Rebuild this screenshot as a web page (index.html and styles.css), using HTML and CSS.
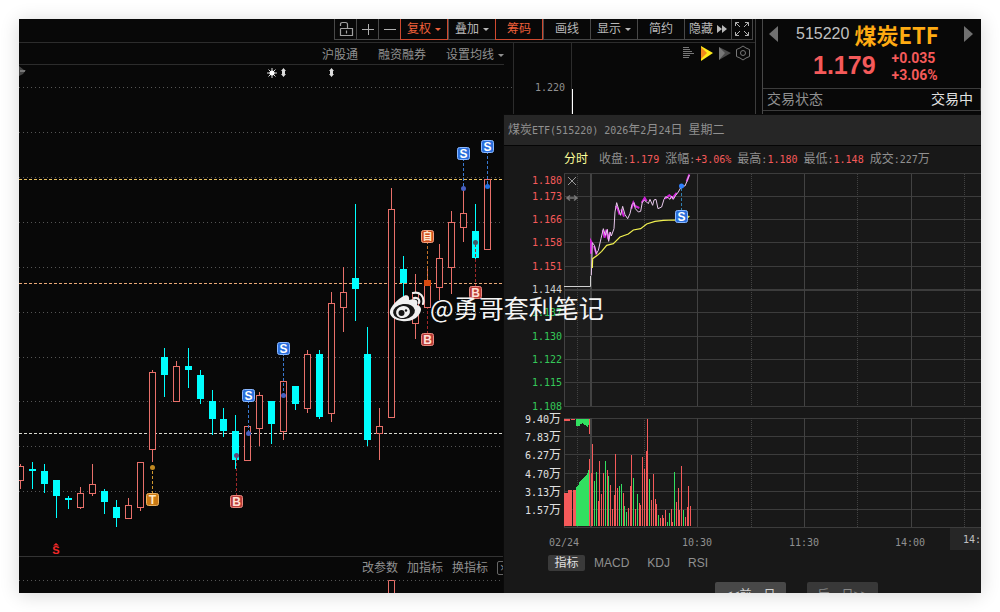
FILE: index.html
```
<!DOCTYPE html>
<html lang="zh-CN">
<head>
<meta charset="utf-8">
<title>煤炭ETF 515220</title>
<link rel="stylesheet" href="styles.css">
</head>
<body>
<div class="app">
  <main class="market">
    <nav class="toolbar">
      <button class="tool icon" aria-label="锁定"><svg width="16" height="16" viewBox="0 0 16 16"><path d="M2.500 7.500H14.500V14.500H2.500V7.500M2.500 5V3.500Q2.500 1.500 4.500 1.500H7.500Q9.500 1.500 9.500 3.500V7M8.500 9.500V12.500" fill="none" stroke="#a0a0a0" stroke-width="1.200"/></svg></button>
      <button class="tool icon" aria-label="放大"><svg width="12" height="12" viewBox="0 0 12 12"><path d="M0 6.500H12M6.500 1V12" stroke="#b0b0b0"/></svg></button>
      <button class="tool icon" aria-label="缩小"><svg width="12" height="12" viewBox="0 0 12 12"><path d="M0 6.500H12" stroke="#b0b0b0"/></svg></button>
      <button class="tool active">复权<i class="caret"></i></button>
      <button class="tool">叠加<i class="caret"></i></button>
      <button class="tool active">筹码</button>
      <button class="tool">画线</button>
      <button class="tool">显示<i class="caret"></i></button>
      <button class="tool">简约</button>
      <button class="tool">隐藏<svg width="10" height="8" viewBox="0 0 10 8"><path d="M0 0L5 4L0 8ZM5 0L10 4L5 8Z" fill="#b8b8b8"/></svg></button>
      <button class="tool icon" aria-label="全屏"><svg width="14" height="14" viewBox="0 0 14 14"><path d="M.5 4V.5H4M.5 .5L5 5M10 .5H13.500V4M13.500 .5L9 5M.5 10V13.500H4M.5 13.500L5 9M13.500 10V13.500H10M13.500 13.500L9 9" fill="none" stroke="#b0b0b0"/></svg></button>
    </nav>
    <div class="panes">
      <section class="kline">
        <div class="subbar">
          <a href="#">沪股通</a><a href="#">融资融券</a><a href="#">设置均线<i class="caret"></i></a>
        </div>
        <svg class="candles" id="candles" viewBox="19 65 494 491" preserveAspectRatio="xMinYMin slice"></svg>
        <div class="indicator-bar">
          <a href="#">改参数</a><a href="#">加指标</a><a href="#">换指标</a><button class="close" aria-label="关闭">×</button>
        </div>
        <svg class="lower" viewBox="19 579 494 14" preserveAspectRatio="xMinYMin slice"><path d="M19 580.500H503" stroke="#555" stroke-dasharray="1 3"/><path d="M388.500 594V580.500H394.500V594" fill="#080808" stroke="#e8706a"/></svg>
      </section>
      <div class="scale"><span class="num">1.220</span></div>
      <section class="chips">
        <svg width="70" height="16" viewBox="681 45 70 16">
          <path d="M683 47.500H689M683 49.500H690M683 51.500H692M683 53.500H694M683 55.500H690M683 57.500H689" stroke="#777"/>
          <path d="M701 46L713 53L701 61Z" fill="#ffeb1a"/><path d="M701 47L707 53L701 59Z" fill="#f08a1c"/>
          <path d="M719 47L731 53L719 60Z" fill="#4a4a4a"/><path d="M719 47L725 53L719 60Z" fill="#777"/>
          <path d="M743 46L746 48L749.500 49.500V56.500L746 58L743 60L740 58L736.500 56.500V49.500L740 48Z" fill="none" stroke="#777"/><circle cx="743" cy="53" r="2.500" fill="none" stroke="#777"/>
        </svg>
      </section>
    </div>
  </main>
  <aside class="quote">
    <div class="quote-title">
      <button class="arrow" aria-label="上一只"><svg width="9" height="16" viewBox="0 0 9 16"><path d="M9 0V16L0 8Z" fill="#707070"/></svg></button>
      <span class="code">515220</span><h1>煤炭ETF</h1>
      <button class="arrow next" aria-label="下一只"><svg width="9" height="16" viewBox="0 0 9 16"><path d="M0 0V16L9 8Z" fill="#707070"/></svg></button>
    </div>
    <div class="quote-price"><strong>1.179</strong><div class="change"><span>+0.035</span><span>+3.06%</span></div></div>
    <div class="status"><span>交易状态</span><b>交易中</b></div>
  </aside>

  <section class="popup">
    <header class="popup-head">煤炭<span class="num">ETF(515220) 2026</span>年<span class="num">2</span>月<span class="num">24</span>日<span class="num"> </span>星期二</header>
    <div class="summary">
      <b>分时</b>
      <span>收盘<span class="num">:<em>1.179</em></span></span>
      <span>涨幅<span class="num">:<em>+3.06%</em></span></span>
      <span>最高<span class="num">:<em>1.180</em></span></span>
      <span>最低<span class="num">:<em>1.148</em></span></span>
      <span>成交<span class="num">:227</span>万</span>
    </div>
    <svg class="intraday" id="intraday" viewBox="504 172 477 378" preserveAspectRatio="xMinYMin slice"></svg>
    <div class="tabs">
      <button class="tab selected">指标</button><button class="tab">MACD</button><button class="tab">KDJ</button><button class="tab">RSI</button>
    </div>
    <div class="days"><button>&lt;&lt;前一日</button><button class="dim" disabled>后一日&gt;&gt;</button></div>
  </section>

  <div class="watermark">
    <svg width="38" height="32" viewBox="0 0 38 32">
      <path d="M13 6C17 3 21 4 20 9C26 7 30 9 28 14C32 15 33 18 31 22C28 28 21 31 13 30C5 29 0 25 1 20C2 15 8 9 13 6Z" fill="#f0f0f0"/>
      <ellipse cx="15" cy="20.500" rx="11" ry="7.500" transform="rotate(-8 15 20.500)" fill="#151515"/>
      <ellipse cx="14" cy="21" rx="7" ry="6" transform="rotate(-12 14 21)" fill="#f0f0f0"/>
      <circle cx="12.500" cy="22" r="3" fill="#151515"/><circle cx="17" cy="19.500" r="1.200" fill="#151515"/>
      <path d="M24 2C31 0 36 6 34 13M25 7C29 6 31 9 30 12" fill="none" stroke="#f0f0f0" stroke-width="2.200" stroke-linecap="round"/>
    </svg>
    <span>@勇哥套利笔记</span>
  </div>
</div>
<script src="charts.js"></script>
</body>
</html>
```
FILE: styles.css
```
* { box-sizing: border-box; }
body {
  margin: 0;
  padding: 19px;
  background: #fff;
  font: 12px/16px "Liberation Sans", "Noto Sans CJK SC", sans-serif;
  color: #909090;
}
button { font: inherit; color: inherit; background: none; border: 0; padding: 0; }
a { color: inherit; text-decoration: none; }
.num { font-family: "DejaVu Sans Mono", monospace; font-size: 10px; white-space: pre; }
svg { display: block; }

.app {
  position: relative;
  display: flex;
  gap: 6px;
  height: calc(100vh - 38px);
  overflow: hidden;
  background: #080808;
}
body::before {
  content: "";
  position: absolute;
  inset: 19px;
  box-shadow: 0 2px 18px rgba(0, 0, 0, .16);
}
.market { flex: 1; display: flex; flex-direction: column; min-width: 0; border-right: 1px solid #3c3c3c; }

.toolbar { display: flex; justify-content: flex-end; height: 24px; padding: 0 2px 2px 0; border-bottom: 1px solid #2c2c2c; }
.tool {
  display: flex;
  align-items: center;
  justify-content: center;
  gap: 4px;
  width: 47px;
  border: 1px solid #484848;
  border-width: 0 0 1px 1px;
  color: #b8b8b8;
}
.tool:last-child { border-right-width: 1px; }
.tool.icon { width: 22px; }
.tool.active { width: 48px; color: #f0603a; border-color: #d04a30; border-right-width: 1px; }
.caret { border: 3px solid transparent; border-top-color: currentColor; border-bottom: 0; }

.panes { flex: 1; display: flex; min-height: 0; }
.kline { width: 495px; display: flex; flex-direction: column; border-right: 1px solid #2c2c2c; }
.subbar { display: flex; justify-content: flex-end; gap: 20px; height: 22px; padding: 3px 0 0; margin-right: 9px; border-bottom: 1px solid #2c2c2c; }
.subbar a { display: flex; align-items: center; gap: 4px; }
.candles { width: 100%; flex: 1; min-height: 0; }
.indicator-bar { display: flex; justify-content: flex-end; align-items: center; gap: 9px; height: 23px; margin-right: 9px; border-top: 1px solid #333; }
.close { width: 13px; height: 14px; margin-right: -6px; line-height: 12px; border: 1px solid #666; border-radius: 2px; }
.lower { width: 100%; height: 14px; }
.scale { width: 58px; padding: 36px 6px 0 0; text-align: right; border-right: 1px solid #2c2c2c; }
.chips { flex: 1; display: flex; justify-content: flex-end; align-items: flex-start; padding: 2px 4px 0 0; }
.chips::before { content: ""; width: 1px; height: 60px; margin: 44px auto 0 0; background: #fff; }

.quote { width: 219px; border-left: 1px solid #484848; }
.quote-title { display: flex; align-items: center; gap: 5px; height: 30px; padding: 0 8px 0 6px; }
.arrow { margin-right: 13px; }
.arrow.next { margin: 0 0 0 auto; }
.code { font-size: 16px; color: #c0c0c0; }
h1 { margin: 0; font: bold 22px/26px "Noto Sans CJK SC", sans-serif; color: #ffab12; }
.quote-price { display: flex; align-items: center; gap: 16px; height: 39px; padding-left: 50px; color: #f55a5a; }
.quote-price strong { font-size: 25px; line-height: 28px; margin-bottom: 8px; }
.change { display: flex; flex-direction: column; margin-bottom: 4px; font: bold 14px/17px Roboto, sans-serif; }
.status { display: flex; justify-content: space-between; padding: 1px 7px 0 4px; height: 23px; font-size: 14px; line-height: 18px; border: 1px solid #3c3c3c; border-left: 0; }
.status b { font-weight: normal; color: #e0e0e0; }

.popup {
  position: absolute;
  inset: 96px 0 0 485px;
  display: flex;
  flex-direction: column;
  overflow: hidden;
  background: #181818;
  box-shadow: 0 0 0 1px #0a0a0a;
}
.popup-head { flex: none; height: 31px; padding: 7px 4px; background: #262626; border-bottom: 1px solid #050505; }
.summary { flex: none; display: flex; align-items: center; gap: 6px; height: 26px; padding-left: 60px; white-space: nowrap; }
.summary b { font-weight: normal; color: #ffff9a; margin-right: 5px; }
.summary em { font-style: normal; color: #f55a5a; }
.intraday { flex: none; width: 100%; height: 378px; }
.tabs { flex: none; display: flex; gap: 18px; padding: 5px 0 0 44px; }
.tab { height: 16px; line-height: 16px; }
.tab.selected { width: 37px; margin-right: -9px; color: #e0e0e0; background: #3a3a3a; border-radius: 2px; }
.days { flex: none; display: flex; gap: 21px; padding: 11px 0 0 211px; }
.days button { width: 71px; height: 26px; border-radius: 2px; background: #484848; color: #d0d0d0; }
.days .dim { background: #383838; color: #888; }

.watermark {
  position: absolute;
  left: 370px;
  top: 271px;
  display: flex;
  align-items: center;
  gap: 3px;
  font: 25px/34px "Noto Sans CJK SC", sans-serif;
  color: #f4f4f4;
  white-space: nowrap;
}

.axis { font: 10px "DejaVu Sans Mono", "Noto Sans CJK SC", monospace; text-anchor: end; }
.axis .wan { font-size: 12px; }
.time { font: 10px "DejaVu Sans Mono", monospace; fill: #909090; }
.badge { font: bold 12px "Liberation Sans", "Noto Sans CJK SC", sans-serif; text-anchor: middle; }
.badge.han { font-size: 10px; }
.signal { font: bold 11px "Liberation Sans", sans-serif; text-anchor: middle; }
```
FILE: charts.js
```
const RED = '#e8706a', CYAN = '#00ffff', UP = '#f55a5a', DOWN = '#32e060';
const line = (x1, y1, x2, y2, stroke, extra = '') =>
  `<path d="M${x1} ${y1}L${x2} ${y2}" stroke="${stroke}" ${extra}/>`;
const rect = (x, y, w, h, fill, extra = '') =>
  `<rect x="${x}" y="${y}" width="${w}" height="${h}" fill="${fill}" ${extra}/>`;

const badgeColors = {
  S: ['#2b6fdc', '#8ab8ff', '#fff'],
  B: ['#b83c38', '#e88a80', '#ffe0d8'],
  T: ['#c87814', '#e8b060', '#ffe8c0'],
  '自': ['#d05020', '#f0a080', '#ffe8d0']
};
function badge(x, y, t) {
  const [fill, stroke, ink] = badgeColors[t];
  const han = t === '自';
  return rect(x - 5.5, y - 5.5, 12, 12, fill, `rx="2" stroke="${stroke}"`) +
    `<text class="badge${han ? ' han' : ''}" x="${x + 0.5}" y="${y + (han ? 4 : 5)}" fill="${ink}">${t}</text>`;
}

/* Daily candles: direction, high, body top, body bottom, low */
const candles = [
  ['r',464,466,481,489],['c',462,469,471,489],['c',464,471,484,493],['c',480,480,496,518],
  ['c',496,498,500,509],['r',487,493,508,509],['r',464,484,494,496],['c',489,491,502,514],
  ['c',500,507,518,527],['r',498,505,519,519],['r',462,462,508,511],['r',370,372,450,462],
  ['c',348,357,375,397],['r',361,366,402,402],['c',348,366,370,388],['c',370,375,399,404],
  ['c',390,401,419,435],['c',408,419,431,437],['c',415,431,460,469],['r',426,426,461,461],
  ['r',392,395,429,446],['c',401,401,424,444],['r',379,381,432,440],['c',386,386,404,410],
  ['r',350,354,409,413],['c',350,354,417,419],['r',292,303,414,422],['r',267,292,308,332],
  ['c',204,278,289,321],['c',327,354,440,446],['r',408,426,434,460],['r',188,209,418,418],
  ['c',256,269,283,310],['r',274,292,324,339],['r',267,280,308,308],['r',244,258,288,300],
  ['r',211,222,268,294],['r',188,213,228,242],['c',204,231,258,260],['r',177,179,250,250]
];

let k = '';
[87, 132, 177, 222, 267, 312, 357, 401, 446, 491].forEach(y => {
  k += line(19, y + 0.5, y === 87 ? 513 : 502, y + 0.5, '#555', 'stroke-dasharray="1 3"');
});
[[179, '#e8c060'], [283, '#e8a878'], [433, '#d8d8d0']].forEach(([y, c]) => {
  k += line(19, y + 0.5, 502, y + 0.5, c, 'stroke-dasharray="3 2"');
});
candles.forEach(([d, hi, top, bot, lo], i) => {
  const x = Math.floor(20.4 + 11.975 * i) + 0.5;
  if (d === 'c') {
    k += line(x, hi, x, lo, CYAN) + rect(x - 3.5, top, 7, bot - top, CYAN);
  } else {
    k += line(x, hi, x, top, RED) + line(x, bot, x, lo, RED) +
      rect(x - 3, top + 0.5, 6, bot - top - 1, '#080808', `stroke="${RED}"`);
  }
});
/* Trade marks: x, badge y, dot y, letter, link colour, dot colour */
[
  [463,153,188,'S','#3878d0','#4860c0'],[487,146,186,'S','#3878d0','#2070e0'],
  [283,348,395,'S','#3878d0','#4860c0'],[248,395,433,'S','#3878d0','#4860c0'],
  [475,292,242,'B','#a02828','#405868'],[427,339,0,'B','#a02828',''],
  [236,501,455,'B','#a02828','#604878'],[152,499,467,'T','#d09830','#c08820'],
  [427,236,0,'自','#c07028','']
].forEach(([x, y, dy, t, link, dot]) => {
  const end = dy || (t === 'B' ? 308 : 280);
  k += line(x + 0.5, y, x + 0.5, end, link, 'stroke-dasharray="3 2"');
  if (dot) k += `<circle cx="${x + 0.5}" cy="${dy + 0.5}" r="2.5" fill="${dot}"/>`;
  k += badge(x, y, t);
});
k += rect(424, 280, 7, 6, '#d84a10');
k += '<path d="M272 68V78M267 73H277M268.500 69.500L275.500 76.500M275.500 69.500L268.500 76.500" stroke="#ddd"/><circle cx="272" cy="73" r="2.500" fill="#fff"/>';
[283, 331].forEach(x => {
  k += `<path d="M${x + .5} 68L${x + 3} 71H${x + 2}V74H${x + 3}L${x + .5} 77L${x - 2} 74H${x - 1}V71H${x - 2}Z" fill="#ddd"/>`;
});
k += '<path d="M19 66L24 70H26L23 74L19 76Z" fill="#444"/><path d="M20 71H25" stroke="#aaa"/>';
k += '<text class="signal" x="56" y="554" fill="#f02828">S</text><path d="M53 545.500L56 543L59 545.500Z" fill="#f02828"/>';
document.getElementById('candles').innerHTML = k;

let p = rect(564, 174, 27, 232, '#1c1c1c') + rect(564, 418, 27, 109, '#1c1c1c');
const prices = [
  [173,180,'1.180'],[196,196,'1.173'],[219,219,'1.166'],[242,242,'1.158'],[266,266,'1.151'],
  [290,289,'1.144'],[312,312,'1.137'],[336,336,'1.130'],[359,359,'1.122'],[382,382,'1.115'],[406,406,'1.108']
];
prices.forEach(([gy, ty, t], i) => {
  p += line(564, gy + (i === 5 ? 0 : 0.5), 981, gy + (i === 5 ? 0 : 0.5), '#3c3c3c', i === 5 ? 'stroke-width="2"' : '');
  const c = i < 5 ? '#f55a5a' : i === 5 ? '#d0d0d0' : '#35c858';
  p += `<text class="axis" x="562" y="${ty + 4}" fill="${c}">${t}</text>`;
});
[[418,'9.40'],[436,'7.83'],[454,'6.27'],[473,'4.70'],[491,'3.13'],[509,'1.57'],[527,'']].forEach(([y, t]) => {
  p += line(564, y + 0.5, 981, y + 0.5, '#3c3c3c');
  if (t) p += `<text class="axis" x="561" y="${y + 5}" fill="#e0e0e0">${t}<tspan class="wan">万</tspan></text>`;
});
[[564,0],[577,1],[590,2],[644,1],[697,0],[751,1],[804,0],[857,1],[911,0],[964,1]].forEach(([x, kind]) => {
  const style = kind === 1 ? 'stroke-dasharray="1 1"' : kind === 2 ? 'stroke-width="2"' : '';
  const cx = kind === 2 ? x + 1 : x + 0.5;
  p += line(cx, 174, cx, 406, '#424242', style) + line(cx, 418, cx, 527, '#424242', style);
});

/* Opening auction volume */
p += rect(564, 493, 4, 33, UP) + rect(568, 490, 4, 36, UP) + rect(573, 490, 3, 36, UP);
[487,486,485,482,481,480,479,478,477,476,475,473,470].forEach((y, i) => {
  p += rect(576 + i, y, 1, 526 - y, DOWN);
});
p += rect(589, 459, 1, 67, UP) + rect(564, 419, 6, 2, UP) + rect(571, 419, 4, 1, UP);
[426,426,426,426,424,424,423,424,425,425,426,427,425].forEach((y, i) => {
  p += rect(576 + i, 419, 1, y - 419, DOWN);
});
p += rect(589, 419, 1, 15, UP);

/* Minute volume: x offset, top offset, direction, in thirds of a unit */
const volume = '274,188,r 277,102,r 283,213,g 289,186,g 295,273,r 298,153,r 304,252,r 310,190,r 316,153,g 322,180,r 325,198,g 331,226,r 337,297,r 343,255,r 346,132,r 352,234,r 358,228,g 364,222,g 370,249,r 373,288,g 379,306,g 385,294,r 391,228,r 394,135,r 400,204,g 406,297,r 412,252,g 418,279,r 421,285,r 427,141,r 433,177,r 439,123,r 442,27,r 448,207,g 454,270,r 460,192,r 466,267,r 469,282,r 475,315,g 481,324,r 487,315,r 490,324,r 496,300,r 502,335,g 508,309,g 514,297,r 517,335,r 523,186,g 529,276,r 535,234,r 538,300,r 544,168,r 550,300,g 556,320,r 562,291,r 565,228,r 571,288,r';
volume.split(' ').forEach(item => {
  const [x, y, d] = item.split(',');
  const top = 410 + Math.round(y / 3);
  p += rect(500 + Math.floor(x / 3), top, 1, 526 - top, d === 'r' ? UP : DOWN);
});

const price = '274,490 277,392 283,400 289,425 295,415 303,380 310,350 316,370 322,352 326,388 331,360 334,372 342,350 345,300 350,272 356,292 362,310 368,283 375,308 383,320 390,305 396,278 402,272 406,290 415,300 422,298 427,270 433,265 440,270 445,275 450,262 458,280 462,264 468,262 474,290 485,285 492,262 497,254 505,258 510,262 515,252 520,262 527,250 535,240 545,222 555,222 562,205 568,189';
const average = '277,468 278,440 292,430 305,418 320,400 340,395 360,375 385,366 400,354 422,350 440,336 465,328 490,325 522,324 555,325 568,312';
const accents = 'M273 425V388L277 395M282 402L290 428M308 355L314 377L319 353L325 382L331 360M347 282L353 290L359 308M364 292L372 314M394 290L400 272L405 282L418 288M425 272L434 258L440 268M495 260L508 250L518 258L530 243M560 208L568 187';
const thin = 'fill="none" vector-effect="non-scaling-stroke"';
p += '<path d="M564 286.500H590.500V276" fill="none" stroke="#d0d0d0"/>';
p += `<g transform="translate(500 112) scale(.33333)"><path d="${accents}" stroke="#d020d8" stroke-width="2" ${thin}/><polyline points="${price}" stroke="#e8c8ec" ${thin}/><polyline points="${average}" stroke="#f0f050" stroke-width="1.200" ${thin}/></g>`;
p += line(681.5, 188, 681.5, 211, '#3080b0', 'stroke-dasharray="3 2"') +
  '<circle cx="681.500" cy="186" r="2.500" fill="#3080ff"/>' + badge(681, 216, 'S');
p += '<path d="M568 177L576 185M576 177L568 185" stroke="#999"/>';
p += '<path d="M567 198H577M570 195.500L567 198L570 200.500M574 195.500L577 198L574 200.500" fill="none" stroke="#777" stroke-width="1.500"/>';
p += rect(950, 528, 31, 22, '#262626');
[[549,'02/24'],[682,'10:30'],[789,'11:30'],[895,'14:00']].forEach(([x, t]) => {
  p += `<text class="time" x="${x}" y="546">${t}</text>`;
});
p += '<text class="time" x="963" y="543" style="fill:#c0c0c0">14:</text>';
document.getElementById('intraday').innerHTML = p;
```
